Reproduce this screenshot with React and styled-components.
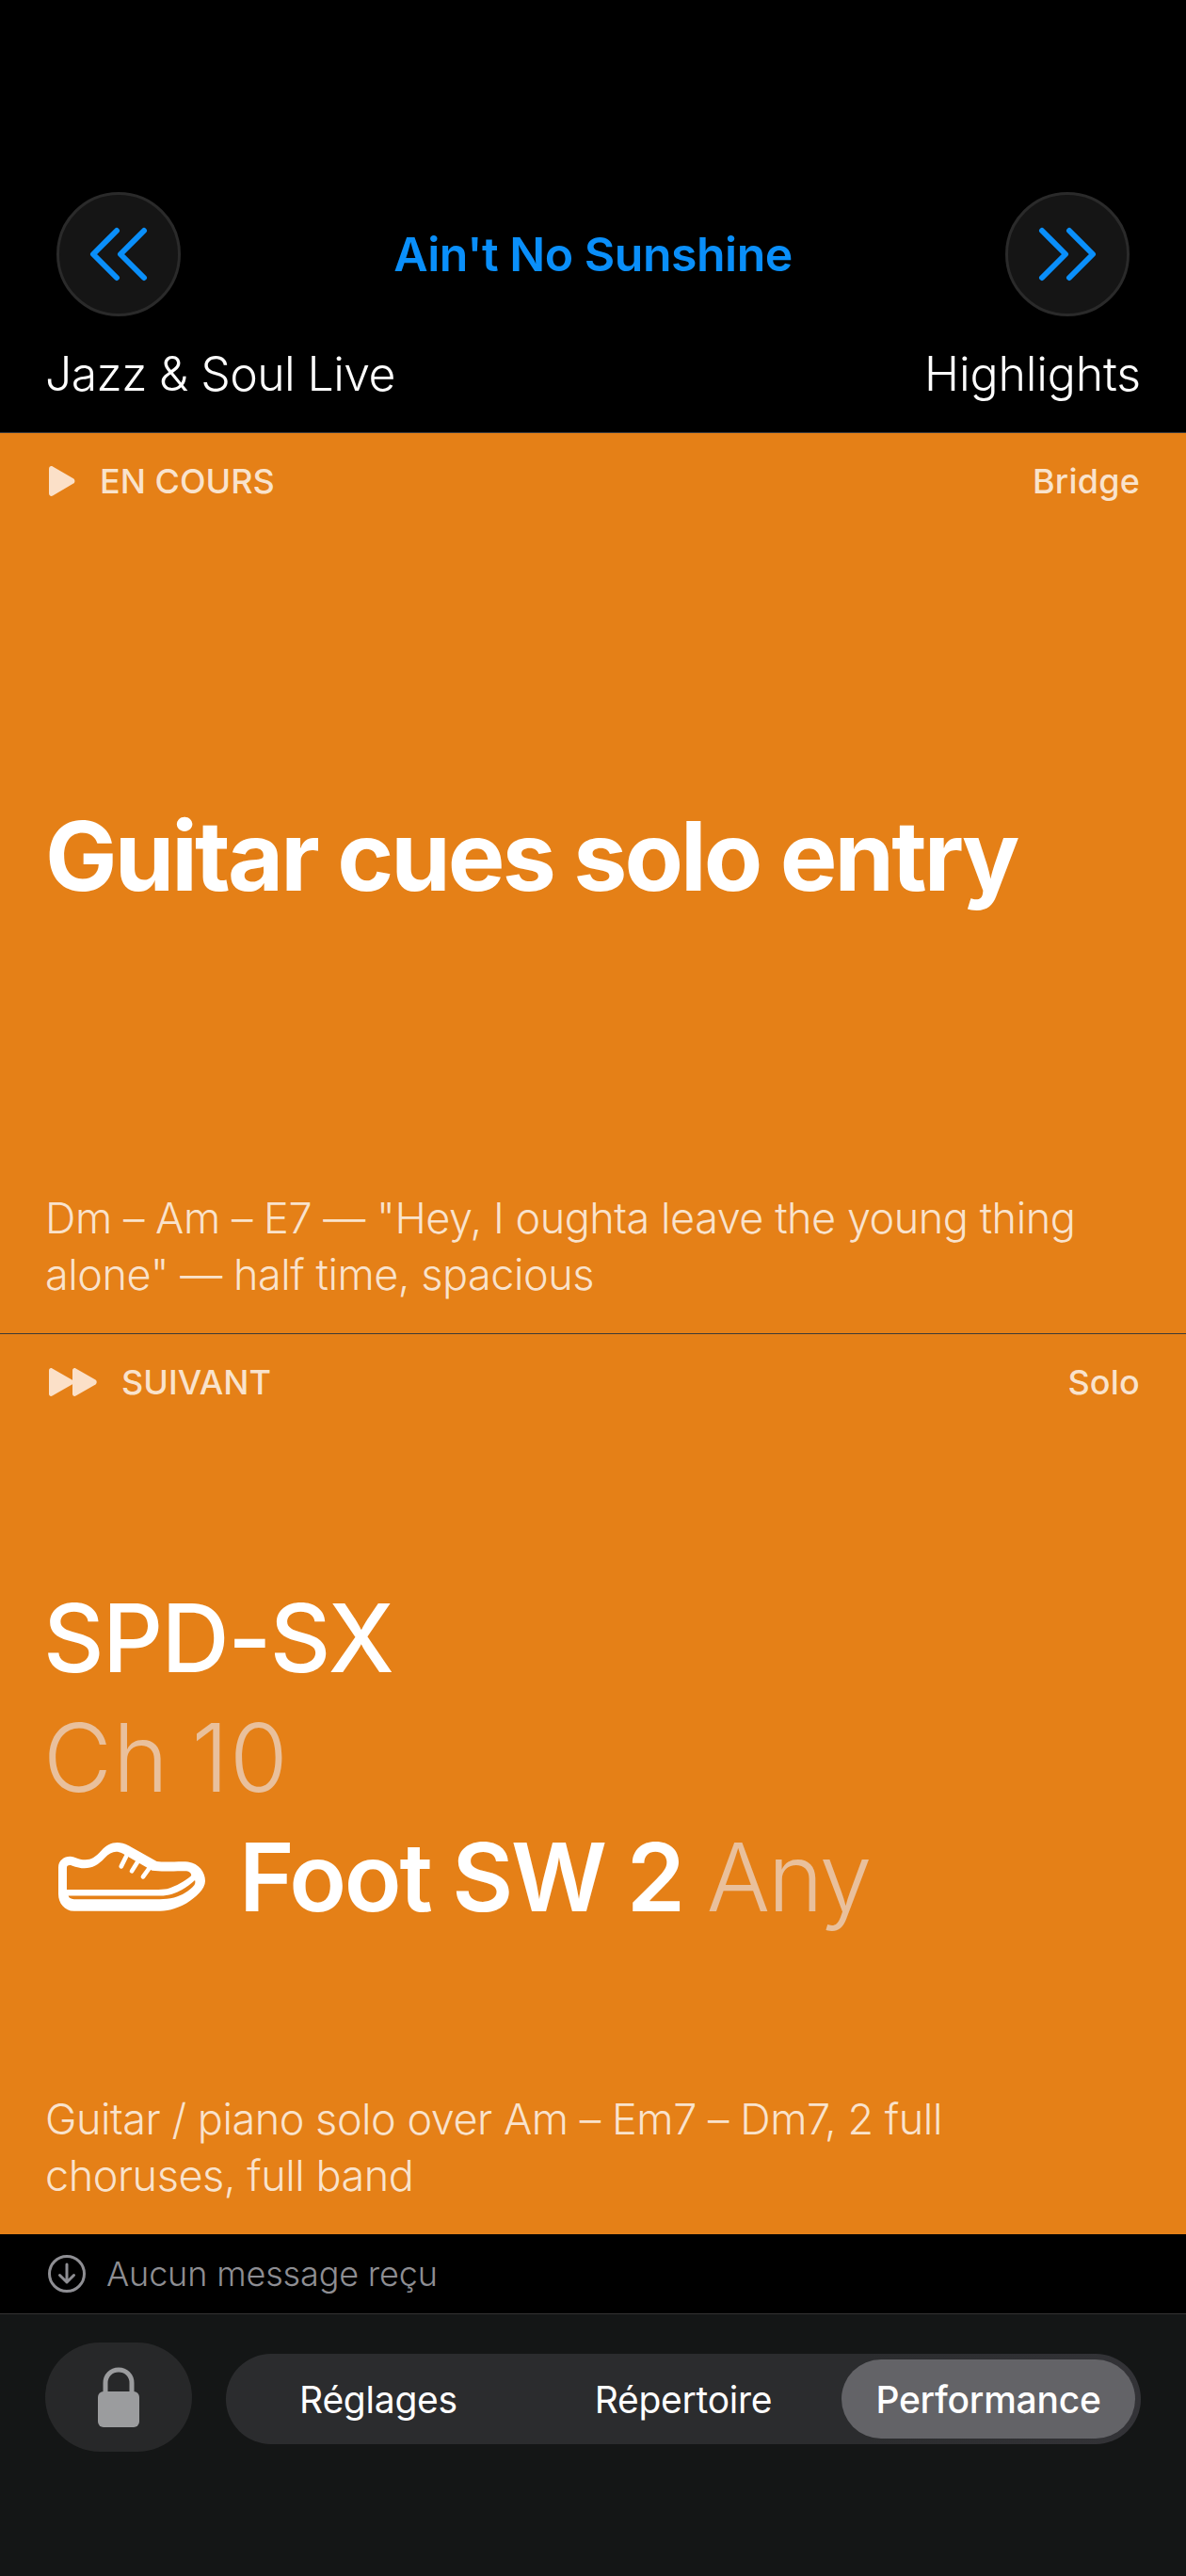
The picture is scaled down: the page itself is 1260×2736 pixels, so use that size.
import React from "react"
import styled, { createGlobalStyle } from "styled-components"

const GlobalStyle = createGlobalStyle`
  html, body {
    margin: 0;
    padding: 0;
    background: #000;
  }
  * {
    box-sizing: border-box;
  }
`

const Screen = styled.div`
  width: 1260px;
  height: 2736px;
  display: flex;
  flex-direction: column;
  background: #000;
  color: #fff;
  font-family: Inter, "Noto Sans", sans-serif;
  overflow: hidden;
`

const Header = styled.header`
  height: 460px;
  flex: none;
  padding: 204px 48px 0;
  border-bottom: 1px solid #3a3a3c;
`

const NavRow = styled.div`
  display: flex;
  align-items: center;
  justify-content: space-between;
  padding: 0 12px;
`

const RoundButton = styled.button`
  width: 132px;
  height: 132px;
  padding: 0;
  display: flex;
  align-items: center;
  justify-content: center;
  border-radius: 50%;
  border: 3px solid #2a2a2a;
  background: #151515;
`

const SongTitle = styled.h1`
  margin: 0;
  font-size: 50px;
  line-height: 60px;
  font-weight: 600;
  letter-spacing: -0.5px;
  color: #0a8ffa;
`

const SetRow = styled.div`
  display: flex;
  justify-content: space-between;
  margin-top: 31px;
  font-size: 50px;
  line-height: 60px;
  font-weight: 350;
`

const SetName = styled.span`
  letter-spacing: ${(p) => p.$spacing}px;
`

const Panel = styled.section`
  flex: 1;
  display: flex;
  flex-direction: column;
  padding: 28px 48px 32px;
  background: #e58017;
  & + & {
    border-top: 1px solid #3d3a36;
  }
`

const PanelTop = styled.div`
  display: flex;
  align-items: center;
  height: 46px;
  font-size: 36px;
  font-weight: 550;
  color: rgba(255, 255, 255, 0.78);
`

const PanelLabel = styled.span`
  display: flex;
  align-items: center;
  gap: 26px;
  margin-left: 4px;
  letter-spacing: 0;
`

const Section = styled.span`
  margin-left: auto;
  margin-right: 1px;
  letter-spacing: 0.2px;
`

const PanelBody = styled.div`
  flex: 1;
  display: flex;
  flex-direction: column;
  justify-content: center;
  padding-top: 20px;
`

const Cue = styled.div`
  font-size: 102px;
  line-height: 122px;
  font-weight: 700;
  letter-spacing: -2.9px;
`

const BigLine = styled.div`
  display: flex;
  align-items: center;
  height: 127px;
  margin-left: -2px;
  font-size: 100px;
  font-weight: ${(p) => p.$weight};
  letter-spacing: ${(p) => p.$spacing}px;
  word-spacing: ${(p) => p.$words || 0}px;
  color: ${(p) => (p.$dim ? "rgba(235, 235, 245, 0.6)" : "#fff")};
`

const Shoe = styled.svg`
  flex: none;
  width: 156px;
  height: 76px;
  margin: 0 36px 0 16px;
`

const Any = styled.span`
  margin-left: 25px;
  font-weight: 350;
  color: rgba(235, 235, 245, 0.6);
`

const Note = styled.p`
  margin: 0;
  font-size: 45px;
  line-height: 60px;
  font-weight: 340;
  letter-spacing: -0.47px;
  color: rgba(255, 255, 255, 0.78);
`

const Status = styled.div`
  height: 84px;
  flex: none;
  display: flex;
  align-items: center;
  gap: 22px;
  padding: 0 51px;
  font-size: 36px;
  font-weight: 340;
  letter-spacing: -0.15px;
  color: #8e8e93;
`

const Footer = styled.footer`
  flex: none;
  height: 279px;
  display: flex;
  align-items: flex-start;
  gap: 36px;
  padding: 30px 48px 0;
  background: #141616;
  border-top: 1px solid #333;
`

const LockButton = styled.button`
  width: 156px;
  height: 116px;
  padding: 0;
  display: flex;
  align-items: center;
  justify-content: center;
  border: 0;
  border-radius: 58px;
  background: #272829;
`

const Tabs = styled.nav`
  width: 972px;
  height: 96px;
  margin-top: 12px;
  display: grid;
  grid-template-columns: repeat(3, 312px);
  gap: 12px;
  padding: 6px;
  border-radius: 48px;
  background: linear-gradient(90deg, #2b2c2e 70%, #333337 100%);
`

const Tab = styled.div`
  display: flex;
  align-items: center;
  justify-content: center;
  height: 84px;
  border-radius: 42px;
  font-size: 39px;
  font-weight: ${(p) => (p.$active ? 500 : 400)};
  letter-spacing: -0.25px;
  background: ${(p) => (p.$active ? "#636367" : "transparent")};
`

const Chevrons = ({ flip }) => (
  <svg
    width="62"
    height="58"
    viewBox="0 0 62 58"
    fill="none"
    stroke="#0a8ffa"
    strokeWidth="6"
    strokeLinecap="round"
    strokeLinejoin="round"
    style={flip ? { transform: "scaleX(-1)" } : undefined}
  >
    <path d="M29 4 4 29l25 25" />
    <path d="M58 4 33 29l25 25" />
  </svg>
)

const PlayIcon = () => (
  <svg width="28" height="32" viewBox="0 0 28 32" fill="#fbe0c8">
    <path d="M0 3C0 .8 2 -.6 4 .5l22 12.7c1.9 1.1 1.9 4.3 0 5.4L4 31.5C2 32.6 0 31.2 0 29z" />
  </svg>
)

const NextIcon = () => (
  <svg width="51" height="30" viewBox="0 0 51 30" fill="#fbe0c8">
    <path d="M0 2.5C0 .6 1.8 -.5 3.5.4l21 12.2c1.6 1 1.6 3.8 0 4.8l-21 12.2C1.8 30.5 0 29.4 0 27.5z" />
    <path d="M25 2.5C25 .6 26.8 -.5 28.5.4l21 12.2c1.6 1 1.6 3.8 0 4.8l-21 12.2c-1.7.9-3.5-.2-3.5-2.1z" />
  </svg>
)

const ShoeIcon = () => (
  <Shoe viewBox="95 112 470 224">
    <path
      fill="#fff"
      fillRule="evenodd"
      d="M95 195C95 170 120 155 145 162C185 178 205 172 232 142C255 115 285 108 320 125L410 176C440 180 480 175 510 177C545 182 565 210 565 238C565 265 535 290 505 310C470 330 440 335 410 335L145 335C115 335 95 310 95 280Z
      M122 195C123 188 130 186 138 189C185 207 215 195 243 165C262 144 280 140 300 150L395 205C430 210 480 205 505 207C515 208 522 215 520 222C500 240 470 255 450 262C440 265 430 266 415 266L122 266Z
      M127 286L420 286C450 286 470 278 490 267C505 258 520 248 532 236C534 242 533 247 530 252C515 270 490 285 465 292C450 296 435 297 420 297L145 297C135 297 128 292 127 286Z"
    />
    <path
      fill="none"
      stroke="#fff"
      strokeWidth="14"
      strokeLinecap="round"
      d="M296 192 312 160M330 207 350 175M366 225 390 192"
    />
  </Shoe>
)

const ReceiveIcon = () => (
  <svg
    width="40"
    height="40"
    viewBox="0 0 40 40"
    fill="none"
    stroke="#8e8e93"
    strokeWidth="3"
    strokeLinecap="round"
    strokeLinejoin="round"
  >
    <circle cx="20" cy="20" r="18.5" />
    <path d="M20 10v19M12.5 21.5 20 29l7.5-7.5" />
  </svg>
)

const LockIcon = () => (
  <svg width="44" height="64" viewBox="0 0 44 64" fill="#9b9c9e">
    <path
      d="M8 28V17C8 9 14 3 22 3s14 6 14 14v11"
      fill="none"
      stroke="#9b9c9e"
      strokeWidth="5"
    />
    <rect x="0" y="26" width="44" height="38" rx="6" />
  </svg>
)

export default function App() {
  return (
    <Screen>
      <GlobalStyle />
      <Header>
        <NavRow>
          <RoundButton>
            <Chevrons />
          </RoundButton>
          <SongTitle>Ain't No Sunshine</SongTitle>
          <RoundButton>
            <Chevrons flip />
          </RoundButton>
        </NavRow>
        <SetRow>
          <SetName $spacing={-0.6}>Jazz &amp; Soul Live</SetName>
          <SetName $spacing={-0.15}>Highlights</SetName>
        </SetRow>
      </Header>

      <Panel>
        <PanelTop>
          <PanelLabel>
            <PlayIcon />
            EN COURS
          </PanelLabel>
          <Section>Bridge</Section>
        </PanelTop>
        <PanelBody>
          <Cue>Guitar cues solo entry</Cue>
        </PanelBody>
        <Note>
          Dm – Am – E7 — "Hey, I oughta leave the young thing
          <br />
          alone" — half time, spacious
        </Note>
      </Panel>

      <Panel>
        <PanelTop>
          <PanelLabel>
            <NextIcon />
            SUIVANT
          </PanelLabel>
          <Section>Solo</Section>
        </PanelTop>
        <PanelBody>
          <BigLine $spacing={-1.6} $weight={450}>
            SPD-SX
          </BigLine>
          <BigLine $dim $spacing={1.2} $words={-6} $weight={350}>
            Ch 10
          </BigLine>
          <BigLine $spacing={-2.3} $weight={600}>
            <ShoeIcon />
            Foot SW 2<Any>Any</Any>
          </BigLine>
        </PanelBody>
        <Note>
          Guitar / piano solo over Am – Em7 – Dm7, 2 full
          <br />
          choruses, full band
        </Note>
      </Panel>

      <Status>
        <ReceiveIcon />
        Aucun message reçu
      </Status>

      <Footer>
        <LockButton>
          <LockIcon />
        </LockButton>
        <Tabs>
          <Tab>Réglages</Tab>
          <Tab>Répertoire</Tab>
          <Tab $active>Performance</Tab>
        </Tabs>
      </Footer>
    </Screen>
  )
}
